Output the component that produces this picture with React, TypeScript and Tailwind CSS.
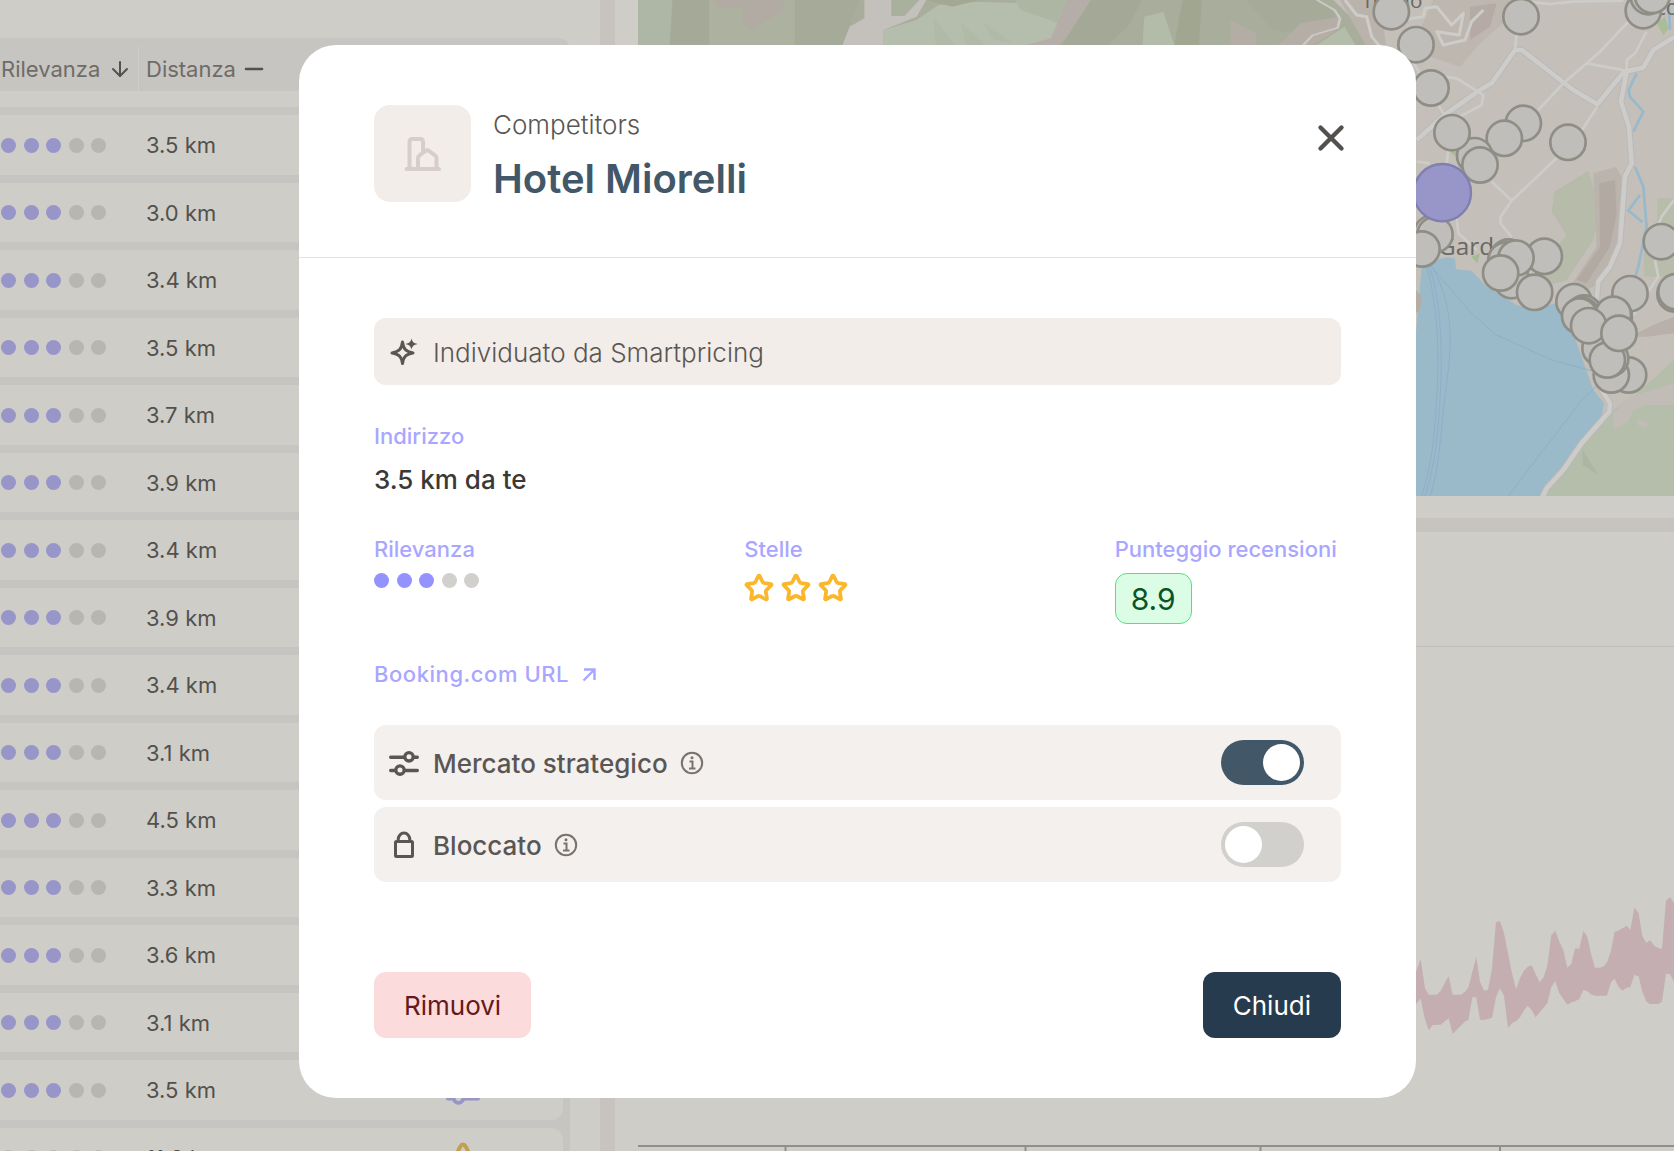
import React from "react";
import { ArrowDown, Minus, Star, X } from "lucide-react";

const distances = [
  "3.5", "3.0", "3.4", "3.5", "3.7", "3.9", "3.4", "3.9",
  "3.4", "3.1", "4.5", "3.3", "3.6", "3.1", "3.5", "11.2",
];

const Dots = ({ value, muted = false }: { value: number; muted?: boolean }) => (
  <div className="flex w-[105px] justify-between" role="img" aria-label={`${value} / 5`}>
    {[1, 2, 3, 4, 5].map((n) => {
      const on = muted ? "bg-[#9896c9]" : "bg-[#9492ff]";
      const off = muted ? "bg-[#b7b6b1]" : "bg-[#d1d0cc]";
      return <span key={n} className={`size-[15px] rounded-full ${n <= value ? on : off}`} />;
    })}
  </div>
);

const SlidersIcon = ({ className }: { className?: string }) => (
  <svg viewBox="0 0 30 30" fill="none" stroke="currentColor" strokeWidth="3.4" strokeLinecap="round" className={className}>
    <path d="M1.700 9.200H15M25 9.200h3.300M1.700 22.500H6M16 22.500h12.300" />
    <circle cx="20" cy="8.800" r="4.200" />
    <circle cx="11" cy="22.100" r="4.200" />
  </svg>
);

const LockIcon = ({ className }: { className?: string }) => (
  <svg viewBox="0 0 30 30" fill="none" stroke="currentColor" strokeWidth="3" strokeLinejoin="round" className={className}>
    <rect x="6.500" y="11.500" width="17" height="15" rx="1" />
    <path d="M9.200 11.500V9.500a5.800 6.500 0 0 1 11.600 0v2" />
  </svg>
);

const SparkleIcon = ({ className }: { className?: string }) => (
  <svg viewBox="0 0 30 30" fill="none" stroke="currentColor" strokeWidth="3" strokeLinejoin="round" className={className}>
    <path d="M13.500 5C14.500 12 16.500 14.500 24 16 16.500 17.500 14.500 19.500 13.500 26.500 12.500 19.500 10.500 17.500 3 16 10.500 14.500 12.500 12 13.500 5Z" />
    <path d="M22.500 1.500C23.500 5 24.500 6 28.500 7 24.500 8 23.500 9 22.500 12.500 21.500 9 20.500 8 16.500 7 20.500 6 21.500 5 22.500 1.500Z" fill="currentColor" stroke="none" />
  </svg>
);

const InfoIcon = () => (
  <svg viewBox="0 0 24 24" fill="none" stroke="currentColor" strokeWidth="2" className="size-6 text-[#78736f]">
    <circle cx="12" cy="12" r="10.200" />
    <path d="M9.500 10.500h3v7M9 17.500h6.500" />
    <circle cx="12" cy="6.800" r="1.500" fill="currentColor" stroke="none" />
  </svg>
);

const BuildingIcon = () => (
  <svg viewBox="0 0 38 36" fill="none" stroke="currentColor" strokeWidth="4" strokeLinecap="round" strokeLinejoin="round" className="h-9 w-[38px] text-[#d7cdca]">
    <path d="M2.500 33H35M5.500 33V6q0-3 3-3H16q3 0 3 3v8" />
    <path d="M14 33V22q0-1.500 1.500-2.600L21.500 15q1.800-1.200 3.600 0L31 19.400q1.500 1.100 1.500 2.600V33" />
  </svg>
);

const LinkArrowIcon = () => (
  <svg viewBox="0 0 16 16" fill="none" stroke="currentColor" strokeWidth="2.4" className="size-4">
    <path d="M3 3.500H13.500V14M13.500 3.500 2.500 14.500" />
  </svg>
);

const Markers = ({ points }: { points: number[][] }) => (
  <g fill="#bfbeba" stroke="#8f8e86" strokeWidth="8">
    {points.map(([x, y]) => (
      <circle key={`${x}-${y}`} cx={x} cy={y} r="53" />
    ))}
  </g>
);

const points = [
  [-26, 35], [48, 134], [93, 264], [363, 50], [730, 32], [745, -10], [757, -14],
  [370, 370], [313, 415], [504, 427], [224, 467], [156, 398], [240, 495],
  [95, 700], [105, 704], [66, 747],
  [325, 771], [318, 780], [335, 842], [433, 769], [348, 774], [302, 819], [404, 877],
  [522, 905], [552, 939], [545, 946], [539, 948], [690, 881], [643, 950], [640, 943],
  [600, 1045], [686, 1125], [634, 1125], [632, 1076], [622, 1080], [566, 977], [657, 1000],
  [784, 725], [825, 882], [828, 875],
];

const Map = () => (
  <svg viewBox="638 0 1036 496" preserveAspectRatio="xMinYMin slice" className="block w-full" role="img" aria-label="Mappa dei competitors">
    <rect x="638" width="1036" height="496" fill="#a9ad9c" />
    {/* hills along the top */}
    <g transform="scale(.5485 .3333) translate(1021 0)">
      <path d="M142 0H215L202 135H142Z" fill="#aeb7a5" />
      <path d="M205 0H272V135H200Z" fill="#a5a997" />
      <path d="M272 0H430V135H272Z" fill="#acb29f" />
      <path d="M280 0H405L413 28 350 88 333 78V20L290 25Z" fill="#b2aba4" />
      <path d="M428 0H545L515 135H428Z" fill="#a6aa99" />
      <path d="M555 0H668L650 50 590 90V135H515L528 80 555 55Z" fill="#c4c0bb" />
      <path d="M604 0H655L628 48H604Z" fill="#a9b09d" />
      <path d="M590 90 650 60 690 15 760 5 860 10 925 30 895 135H590Z" fill="#b5beac" />
      <path d="M680 50 720 135H685ZM730 65 775 135H740ZM770 65 825 130 790 120Z" fill="#b0baa7" />
      <path d="M668 0H765L715 20Z" fill="#a4a794" />
      <path d="M830 0H925L910 70 840 30Z" fill="#acb6a3" />
      <path d="M925 0H968L955 60 910 135H850L895 115Z" fill="#b5ada7" />
      <path d="M968 0H1060L1040 70 1000 135H915Z" fill="#a4a896" />
      <path d="M1065 50 1100 35 1120 135H1062Z" fill="#b3bca9" />
      <path d="M1135 0H1170L1165 135H1120Z" fill="#a1a690" />
      <path d="M1222 60 1270 100 1268 135H1222Z" fill="#b3ada6" />
      <path d="M1250 0H1380L1420 50 1350 100 1300 90Z" fill="#a6ab99" />
      <path d="M1350 70 1420 50 1415 90 1375 135H1310Z" fill="#b5aea7" />
      <path d="M1380 135 1430 80 1450 135Z" fill="#b4bda9" />
      <path d="M1380 0 1412 30 1422 55 1418 83 1372 106 1355 135" fill="none" stroke="#cbc9c5" strokeWidth="5" />
    </g>
    <g transform="translate(1400 0) scale(.3333)">
      <path d="M-200 0H822V1500H-90V140L-140 60Z" fill="#c4bfb9" />
      <path d="M-180 0H-60L-40 150-100 140Z" fill="#b9b3ac" />
      <path d="M100 0H330L320 60 240 130 180 200 90 170 60 90Z" fill="#beb7b0" />
      <path d="M210 20 290 10 270 80 210 120Z" fill="#b5aba4" />
      <path d="M463 575 565 513 600 630 580 720 500 840 400 870 420 800 500 705 455 635Z" fill="#b6bbaa" />
      <path d="M580 520 648 500 680 560 655 750 600 850 540 880 510 860 590 740Z" fill="#bbb4ad" />
      <path d="M598 550 645 540 650 640 630 740 560 850 530 840 600 740Z" fill="#b2a9a2" />
      <path d="M772 595H822V830H732V760L772 720Z" fill="#b8bdab" />
      <path d="M770 70 795 50 806 85 790 106Z" fill="#a9bd98" />
      <path d="M215 770 240 760 232 790Z M150 455H170V470Z" fill="#a3bd90" />
      <path d="M690 1010 760 975 822 950V1000L740 1010Z" fill="#b9b0a9" />
      {/* lake */}
      <path d="M66 790 140 772 165 775 168 808 215 812 260 860 350 915 400 930 465 910 490 960 520 1000 580 1170 612 1210 605 1250 540 1325 480 1410 420 1488H48V1000Z" fill="#9abaca" />
      <path d="M48 870 66 890 60 930 48 940Z" fill="#b5aca3" />
      <path d="M90 790C155 900 160 1000 140 1150S120 1400 90 1490M85 790C120 880 130 1040 120 1200S100 1400 75 1490M80 800C110 900 120 1040 110 1200S90 1400 65 1490M90 795 210 935 285 1003 455 1080 585 1115M600 1150 545 1200 325 1488" fill="none" stroke="#8dafc9" strokeWidth="3" />
      {/* south-east woodland */}
      <path d="M430 1488 500 1410 560 1325 640 1230 700 1190 822 1080V1488Z" fill="#b5bdab" />
      <path d="M640 1240 690 1190 822 1150V1215H740L700 1230 685 1265 642 1292ZM712 1255 743 1270 740 1285 712 1275Z" fill="#c2bcb6" />
      <path d="M548 1350 595 1425 548 1395Z" fill="#afb5a3" />
      {/* streams */}
      <path d="M806 0 810 90M710 220 686 270 690 290 730 335 700 395M705 500 730 560 740 680 715 800 700 850M720 585 685 632 728 667" fill="none" stroke="#97b9cb" strokeWidth="8" />
      {/* roads */}
      <g fill="none" stroke="#b9b9bb" strokeWidth="20" strokeLinejoin="round">
        <path d="M50 420 140 340 240 270 275 250 345 150 365 150 520 270 592 313 672 215 730 203 760 150 822 112M680 215 663 305 687 380 695 490 675 530 660 730 630 800 595 845 590 900" />
        <path d="M605 1170 630 1210 628 1235 545 1330 490 1410 440 1465 428 1490" />
      </g>
      <g fill="none" stroke="#cdccc8" strokeWidth="14" strokeLinejoin="round">
        <path d="M50 420 140 340 240 270 275 250 345 150 365 150 520 270 592 313 672 215 730 203 760 150 822 112M680 215 663 305 687 380 695 490 675 530 660 730 630 800 595 845 590 900" />
        <path d="M605 1170 630 1210 628 1235 545 1330 490 1410 440 1465 428 1490" />
        <path d="M-165 0-130 45-100 50-85 110-60 140M0 60 70 50 75 25 110 20 155 75 190 40 178 105 110 95 130 135 195 120 215 65 250 30" strokeWidth="9" />
        <path d="M345 150 350 100M380 5 450 12 520 5 670 2M690 60 600 155 560 190 490 250 415 330M560 190 670 210M740 95 705 160 680 180V210M592 320 540 400M480 465 335 602 275 545M335 602 302 650V670L335 712M100 225 170 235 250 285 245 315 140 370M50 485 90 490M145 450 140 490M0 120 130 340M170 650 175 700 230 750M822 600 785 650 765 700M765 780 775 830 690 960" strokeWidth="8" />
      </g>
      <g fill="#696863" fontFamily="'Open Sans', sans-serif">
        <text x="114" y="766" fontSize="73">Garda</text>
        <text x="-115" y="24" fontSize="62">Tenno</text>
        <text x="700" y="44" fontSize="64">Arco</text>
      </g>
      <Markers points={points} />
      <circle cx="127" cy="578" r="86" fill="#9896c9" stroke="#817fb0" strokeWidth="7" />
    </g>
  </svg>
);

const PriceChart = () => (
  <svg viewBox="638 860 1036 291" preserveAspectRatio="xMinYMin slice" className="block w-full" role="img" aria-label="Andamento prezzi">
    <g transform="translate(1400 860) scale(.3333)">
      <path
        d="M30 400 48 335 62 298 75 385 86 404H111L122 393 134 370 146 349 158 404H182L194 396 205 383 217 335 229 291 240 365 252 392 264 390 276 325 288 187 300 183 312 220 324 280 336 340 348 388 360 355 371 334 383 320 395 316 407 343 419 367 430 353 442 318 454 226 466 212 478 245 490 270 502 323 514 312 525 265 538 266 550 212 562 230 574 285 585 323H600L612 318 622 305 633 272 644 215 657 211 680 197 691 210 703 143 716 160 727 228 739 249 750 240 763 257 774 264 786 267 798 122 810 111 822 130V365L810 342 798 341 786 425 774 432H750L739 424 727 395 716 349 703 345 691 382 680 383 668 392 656 381 644 356 633 367 621 407H585L573 403 562 394 550 390 538 417 525 424 514 427 502 434 490 417 478 400 466 364 454 380 442 430 430 444 407 472 395 450 383 437 371 453 360 472 348 484 336 490 324 504 312 408 300 385 288 412 276 473 252 480 240 479 229 412H217L205 480 194 485 182 497 158 522 146 475 122 494 98 495 86 511 74 475 62 415 50 430 30 480Z"
        fill="#c4aeb1"
      />
    </g>
    <path d="M638 1146H1674M785.500 1146v6M1025.500 1146v6M1260.500 1146v6M1500 1146v6" fill="none" stroke="#908f8d" strokeWidth="2" />
  </svg>
);

const CompetitorTable = () => (
  <div className="w-[600px] shrink-0 bg-[#cecdc8] pt-[38px]">
    <table className="w-[570px] border-separate border-spacing-x-0 border-spacing-y-2 rounded-tr-xl bg-[#c7c5c1] pr-[7px]">
      <thead>
        <tr className="text-left text-[22px] leading-7 text-[#6e6c67]">
          <th className="h-[61px] w-[139px] border-b-[16px] border-[#cecdc8] p-0 font-normal">
            <div className="flex h-full items-center justify-between border-r border-[#cecdc8] pr-[6px] pl-px">
              Rilevanza <ArrowDown className="size-6 text-[#53514d]" strokeWidth={2} />
            </div>
          </th>
          <th className="border-b-[16px] border-[#cecdc8] p-0 pl-[7px] font-normal">
            <div className="flex items-center gap-1">
              Distanza <Minus className="size-7 text-[#53514d]" strokeWidth={2} />
            </div>
          </th>
          <th className="w-[200px] border-b-[16px] border-[#cecdc8] p-0" aria-label="Stato" />
        </tr>
      </thead>
      <tbody className="text-[22px] leading-7 text-[#53514d]">
        {distances.map((km, i) => (
          <tr key={i} className="odd:h-[60px] even:h-[59px]">
            <td className="bg-[#cecdc8] p-0 pl-px">
              <Dots value={i === 15 ? 0 : 3} muted />
            </td>
            <td className="bg-[#cecdc8] p-0 pl-[7px]">{km} km</td>
            <td className="rounded-r-xl bg-[#cecdc8] p-0 pl-[83px]">
              {i === 14 && <SlidersIcon className="size-[34px] text-[#9896c9]" />}
              {i === 15 && (
                <svg viewBox="0 0 34 34" fill="none" stroke="#c39f52" strokeWidth="4" strokeLinejoin="round" className="size-[34px]">
                  <path d="M3 30 14 6q3-5 6 0l11 24Z" />
                </svg>
              )}
            </td>
          </tr>
        ))}
      </tbody>
    </table>
  </div>
);

type ToggleRowProps = {
  icon: React.ReactNode;
  label: string;
  defaultChecked?: boolean;
};

const ToggleRow = ({ icon, label, defaultChecked }: ToggleRowProps) => (
  <label className="flex h-[75px] items-center rounded-xl bg-[#f4f0ed] pr-[37px] pl-[15px] text-[26px] leading-8 font-medium text-[#5a5653]">
    {icon}
    <span className="ml-[14px] pt-[2px]">{label}</span>
    <span className="ml-3">
      <InfoIcon />
    </span>
    <input
      type="checkbox"
      role="switch"
      defaultChecked={defaultChecked}
      className="ml-auto flex h-[45px] w-[83px] shrink-0 appearance-none items-center rounded-full bg-[#d1d0cc] px-1 before:size-[37px] before:rounded-full before:bg-white checked:justify-end checked:bg-[#425768]"
    />
  </label>
);

const CompetitorDialog = () => (
  <div className="fixed inset-0 flex items-start overflow-hidden pt-[45px] pr-[258px] pl-[299px]">
    <div role="dialog" aria-labelledby="dialog-title" className="min-w-0 flex-1 rounded-[37px] bg-white">
      <header className="flex items-start border-b border-[#e3e3e3] px-[75px] pt-[60px] pb-[54px]">
        <div className="flex size-[97px] items-center justify-center rounded-2xl bg-[#f2ede9]">
          <BuildingIcon />
        </div>
        <div className="ml-[22px]">
          <p className="pt-1 text-[26px] leading-8 font-light text-[#5a5653]">Competitors</p>
          <h1 id="dialog-title" className="pt-[14px] text-[40px] leading-[48px] font-semibold text-[#425768]">
            Hotel Miorelli
          </h1>
        </div>
        <button type="button" aria-label="Chiudi finestra" className="mt-3 -mr-[11px] ml-auto">
          <X className="size-[42px] text-[#53504d]" strokeWidth={2.5} />
        </button>
      </header>

      <div className="px-[75px] py-[60px]">
        <div className="flex h-[67px] items-center gap-[14px] rounded-xl bg-[#f2ede9] pl-[15px] text-[26px] leading-8 font-light text-[#5a5653]">
          <SparkleIcon className="size-[30px]" />
          <span className="pt-[2px]">Individuato da Smartpricing</span>
        </div>

        <p className="mt-9 text-[22px] leading-[30px] font-medium text-[#a9a6ff]">Indirizzo</p>
        <p className="mt-[9px] text-[26px] leading-10 font-medium text-[#3b3936]">3.5 km da te</p>

        <div className="mt-[34px] grid grid-cols-3 gap-36 text-[22px] leading-[30px] font-medium whitespace-nowrap text-[#a9a6ff]">
          <div>
            <p className="mb-[9px]">Rilevanza</p>
            <Dots value={3} />
          </div>
          <div>
            <p className="mb-[9px]">Stelle</p>
            <div className="flex gap-[7px] text-[#fbb72c]" role="img" aria-label="3 stelle">
              {[1, 2, 3].map((n) => (
                <Star key={n} className="size-[30px]" strokeWidth={3} />
              ))}
            </div>
          </div>
          <div>
            <p className="mb-[9px]">Punteggio recensioni</p>
            <span className="flex h-[51px] w-[77px] items-center justify-center rounded-xl border border-[#4ce57b] bg-[#dcfde5] text-[30px] font-normal text-[#0c5327]">
              8.9
            </span>
          </div>
        </div>

        <a href="#booking" className="mt-[35px] flex items-center gap-3 text-[22px] leading-[30px] font-medium tracking-wide text-[#a9a6ff]">
          Booking.com URL <LinkArrowIcon />
        </a>

        <div className="mt-9 flex flex-col gap-[7px]">
          <ToggleRow icon={<SlidersIcon className="size-[30px]" />} label="Mercato strategico" defaultChecked />
          <ToggleRow icon={<LockIcon className="size-[30px]" />} label="Bloccato" />
        </div>

        <div className="mt-[90px] flex justify-between text-[26px] leading-8">
          <button type="button" className="h-[66px] rounded-xl bg-[#fbdbdc] px-[30px] pt-[2px] text-[#64191c]">
            Rimuovi
          </button>
          <button type="button" className="h-[66px] rounded-xl bg-[#263b4d] px-[30px] pt-[2px] text-white">
            Chiudi
          </button>
        </div>
      </div>
    </div>
  </div>
);

export default function App() {
  return (
    <div className="h-screen overflow-hidden bg-[#c7c3be] font-['Inter',sans-serif]">
      <main className="flex h-full">
        <CompetitorTable />
        <div className="ml-[15px] flex min-w-0 flex-1 flex-col">
          <section className="bg-[#cecdc8] pb-[22px] pl-[23px]">
            <Map />
          </section>
          <section className="mt-[14px] flex flex-1 flex-col bg-[#cecdc8]">
            <div className="h-[115px] shrink-0 border-b border-[#bfbebb]" />
            <div className="mt-auto pl-[23px]">
              <PriceChart />
            </div>
          </section>
        </div>
      </main>
      <CompetitorDialog />
    </div>
  );
}
